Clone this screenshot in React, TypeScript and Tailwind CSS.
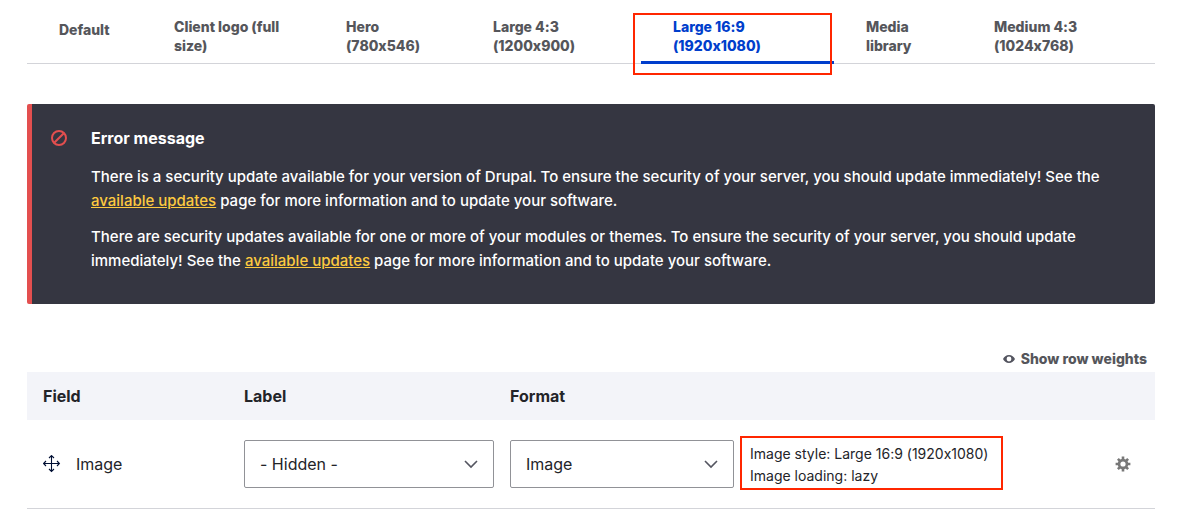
import { useState } from "react";
import clsx from "clsx";

const tabs = [
  { label: "Default", width: "basis-[115px]" },
  { label: "Client logo (full size)", width: "basis-[172px]" },
  { label: "Hero (780x546)", width: "basis-[147px]" },
  { label: "Large 4:3 (1200x900)", width: "basis-[180px]" },
  { label: "Large 16:9 (1920x1080)", width: "basis-[193px]" },
  { label: "Media library", width: "basis-[128px]" },
  { label: "Medium 4:3 (1024x768)", width: "basis-[193px]" },
];

const activeTab = "Large 16:9 (1920x1080)";

function Tabs() {
  return (
    <nav aria-label="Display modes" className="border-b border-[#d3d4d9] pt-[5px]">
      <ul className="flex">
        {tabs.map(({ label, width }) => {
          const active = label === activeTab;
          return (
            <li key={label} className={clsx("relative -mb-px shrink grow", width)}>
              <a
                href="#"
                aria-current={active ? "page" : undefined}
                className={clsx(
                  "flex h-full border-b-[3px] px-8 pt-3 pb-1.5 text-sm leading-[19px] font-extrabold",
                  active ? "border-[#003ecc] text-[#003ecc]" : "border-transparent text-[#55565b]",
                )}
              >
                <span className="flex min-h-6 items-center self-start">{label}</span>
              </a>
              {active && (
                <span className="pointer-events-none absolute top-2 right-0.5 -bottom-[11px] -left-2 border-2 border-[#ff2600]" />
              )}
            </li>
          );
        })}
      </ul>
    </nav>
  );
}

function UpdatesLink() {
  return (
    <a href="#" className="text-[#fdca40] underline">
      available updates
    </a>
  );
}

function ErrorMessage() {
  return (
    <section
      role="alert"
      className="mt-10 flex gap-6 rounded-xs border-l-[5px] border-[#e34f4f] bg-[#353641] pt-[22px] pr-8 pb-[31px] pl-[19px] text-white"
    >
      <svg viewBox="0 0 16 16" className="mt-1 size-4 shrink-0" fill="none" stroke="#e34f4f" strokeWidth="2" aria-hidden="true">
        <circle cx="8" cy="8" r="7" />
        <path d="M3.2 12.8 12.8 3.2" />
      </svg>
      <div className="text-[15px] leading-6 font-medium">
        <h2 className="mb-[15px] text-base font-bold">Error message</h2>
        <p className="mb-3">
          There is a security update available for your version of Drupal. To ensure the security of your server, you
          should update immediately! See the <UpdatesLink /> page for more information and to update your software.
        </p>
        <p>
          There are security updates available for one or more of your modules or themes. To ensure the security of
          your server, you should update immediately! See the <UpdatesLink /> page for more information and to update
          your software.
        </p>
      </div>
    </section>
  );
}

function Select({ label, options }: { label: string; options: string[] }) {
  const [value, setValue] = useState(options[0]);
  return (
    <div className="relative">
      <select
        aria-label={label}
        value={value}
        onChange={(event) => setValue(event.target.value)}
        className="block h-12 w-full appearance-none rounded-xs border border-[#919297] bg-white pr-10 pl-[15px] text-base"
      >
        {options.map((option) => (
          <option key={option}>{option}</option>
        ))}
      </select>
      <svg
        viewBox="0 0 14 9"
        className="pointer-events-none absolute top-5 right-4 h-[9px] w-3.5"
        fill="none"
        stroke="#545560"
        strokeWidth="1.6"
        aria-hidden="true"
      >
        <path d="M1 1l6 6 6-6" />
      </svg>
    </div>
  );
}

function MoveIcon() {
  return (
    <svg viewBox="0 0 18 18" className="size-[18px]" fill="none" stroke="#000f33" strokeWidth="1.1" aria-hidden="true">
      <path d="M8.500 1v15M1 8.500h15M6 3 8.500.6 11 3M6 14l2.500 2.400L11 14M3 6 .6 8.500 3 11M14 6l2.400 2.500L14 11" />
    </svg>
  );
}

function GearIcon() {
  return (
    <svg viewBox="0 0 16 16" className="size-4" aria-hidden="true">
      <g stroke="#787878" strokeWidth="2.6">
        <path d="M8 .6v14.8M.6 8h14.8M2.900 2.900l10.200 10.200M13.100 2.900 2.900 13.100" />
      </g>
      <circle cx="8" cy="8" r="5.3" fill="#787878" />
      <circle cx="8" cy="8" r="2.6" fill="#fff" />
    </svg>
  );
}

function EyeIcon() {
  return (
    <svg viewBox="0 0 12 8" className="h-2 w-3" aria-hidden="true">
      <path
        fill="#545560"
        fillRule="evenodd"
        d="M6 0C3.200 0 1 1.700 0 4c1 2.300 3.200 4 6 4s5-1.700 6-4c-1-2.300-3.200-4-6-4Zm0 1.600a2.400 2.400 0 1 1 0 4.800 2.400 2.400 0 0 1 0-4.800Z"
      />
    </svg>
  );
}

function FieldTable() {
  return (
    <section className="mt-[45px]">
      <div className="flex justify-end pr-2 pb-[3px]">
        <button type="button" className="flex items-center gap-1.5 text-sm font-extrabold text-[#55565b]">
          <EyeIcon />
          Show row weights
        </button>
      </div>
      <table className="w-full table-fixed border-collapse text-left">
        <colgroup>
          <col className="w-[201px]" />
          <col className="w-[266px]" />
          <col className="w-[240px]" />
          <col />
          <col className="w-16" />
        </colgroup>
        <thead>
          <tr className="h-12 bg-[#f3f4f9]">
            <th scope="col" className="px-4 font-bold">Field</th>
            <th scope="col" className="px-4 font-bold">Label</th>
            <th scope="col" className="px-4 font-bold" colSpan={3}>Format</th>
          </tr>
        </thead>
        <tbody>
          <tr className="h-[88px] border-b border-[#d3d4d9]">
            <td className="px-4">
              <div className="flex items-center gap-[15px]">
                <button type="button" aria-label="Drag to re-order">
                  <MoveIcon />
                </button>
                Image
              </div>
            </td>
            <td className="pl-4">
              <Select label="Label display for Image" options={["- Hidden -", "Above", "Inline"]} />
            </td>
            <td className="pl-4">
              <Select label="Format for Image" options={["Image", "URL to image"]} />
            </td>
            <td className="pl-1.5">
              <div className="-mt-0.5 w-fit border-2 border-[#ff2600] pt-[5px] pr-[13px] pb-px pl-2 text-sm leading-[22px]">
                Image style: Large 16:9 (1920x1080)
                <br />
                Image loading: lazy
              </div>
            </td>
            <td>
              <button type="button" aria-label="Edit Image settings" className="mx-auto flex">
                <GearIcon />
              </button>
            </td>
          </tr>
        </tbody>
      </table>
    </section>
  );
}

export default function App() {
  return (
    <main className="min-h-screen bg-white pr-10 pl-[27px] font-['Inter',sans-serif] text-base text-[#232429] [font-feature-settings:'calt'_0]">
      <Tabs />
      <ErrorMessage />
      <FieldTable />
    </main>
  );
}
